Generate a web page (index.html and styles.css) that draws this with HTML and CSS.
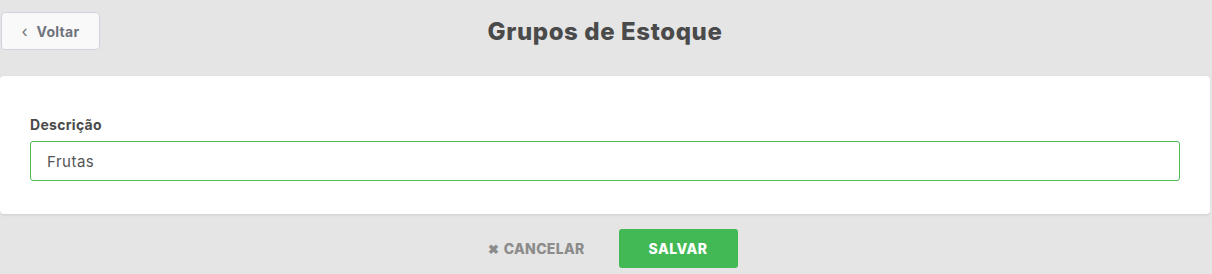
FILE: index.html
```html
<!DOCTYPE html>
<html>
    <head>
        <meta charset="utf-8">
        <link rel="stylesheet" href="styles.css">
    </head>
    <body>
        <header class="top">
            <div class="top-left">
                <button class="back-btn" type="button"><span class="chev">&#8249;</span> Voltar</button>
            </div>
            <h1 class="title">Grupos de Estoque</h1>
            <div class="top-right"></div>
        </header>
        <main class="card">
            <label class="field-label" for="descricao">Descrição</label>
            <input id="descricao" class="field-input" type="text" value="Frutas"/>
        </main>
        <footer class="actions">
            <button class="cancel-btn" type="button"><span class="x">&#10006;</span>CANCELAR</button>
            <button class="save-btn" type="button">SALVAR</button>
        </footer>
    </body>
</html>
```

FILE: styles.css
```css
body {
    margin: 0;
    padding: 0;
    background-color: #e5e5e5;
    font-family: Inter, "Noto Sans", sans-serif;
    color: #4a4a4a;
    width: 1210px;
}
.top {
    display: grid;
    grid-template-columns: 1fr auto 1fr;
    align-items: center;
    padding-top: 12px;
    height: 38px;
    margin-bottom: 26px;
}
.top-left {
    padding-left: 1px;
}
.back-btn {
    height: 38px;
    width: 99px;
    background-color: #f9f9fa;
    border: 1px solid #cfd4dd;
    border-radius: 4px;
    font-family: inherit;
    font-size: 14px;
    font-weight: 700;
    letter-spacing: 0.3px;
    color: #6f737c;
    padding: 0;
    cursor: pointer;
}
.chev {
    font-weight: 400;
    font-size: 16px;
    margin-right: 5px;
}
.title {
    margin: 0;
    font-size: 24px;
    font-weight: 800;
    letter-spacing: 0.6px;
    color: #4a4a4a;
    text-align: center;
}
.card {
    background-color: white;
    border-radius: 4px;
    box-shadow: 0 1px 3px rgba(0, 0, 0, 0.1);
    padding: 41px 30px 33px 30px;
    display: flex;
    flex-direction: column;
}
.field-label {
    font-size: 14px;
    font-weight: 700;
    letter-spacing: 0.3px;
    color: #4a4a4a;
    line-height: 16px;
    margin-bottom: 8px;
}
.field-input {
    height: 40px;
    box-sizing: border-box;
    border: 1px solid #4fbd55;
    border-radius: 3px;
    padding: 0 16px;
    font-family: inherit;
    font-size: 15px;
    letter-spacing: 0.5px;
    color: #555;
    outline: none;
}
.actions {
    display: flex;
    justify-content: center;
    align-items: center;
    gap: 18px;
    margin-top: 15px;
}
.cancel-btn {
    background: none;
    border: none;
    height: 39px;
    padding: 0 16px;
    font-family: inherit;
    font-size: 14px;
    font-weight: 800;
    letter-spacing: 0.3px;
    color: #8c8c8c;
    cursor: pointer;
}
.x {
    font-size: 13px;
    margin-right: 4px;
}
.save-btn {
    height: 39px;
    width: 119px;
    background-color: #42b955;
    border: none;
    border-radius: 3px;
    font-family: inherit;
    font-size: 14px;
    font-weight: 800;
    letter-spacing: 0.5px;
    color: white;
    cursor: pointer;
}
```
